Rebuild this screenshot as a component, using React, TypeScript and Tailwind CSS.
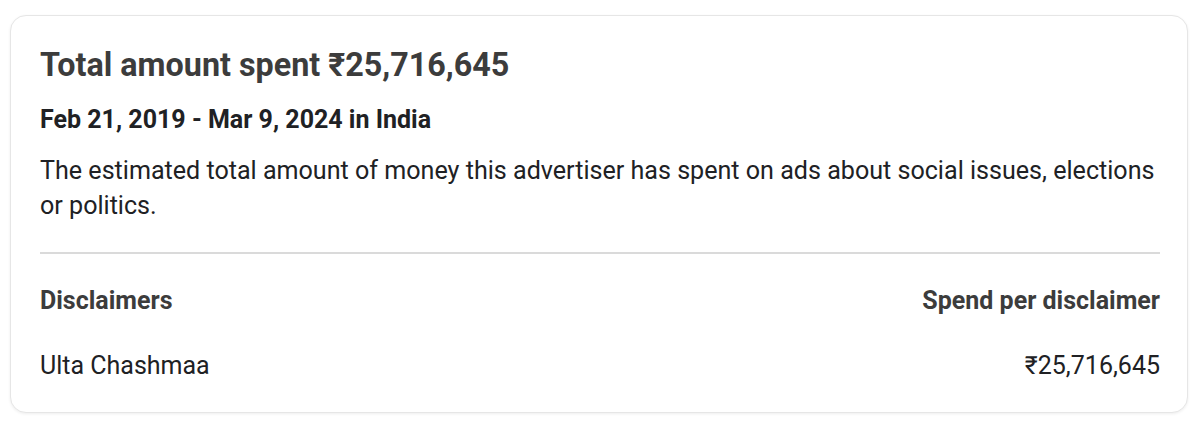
export default function App() {
  return (
    <div className="min-h-screen bg-white pl-[10px] pr-[12px] pt-[15px] pb-[18px]" style={{ fontFamily: "Roboto, 'Liberation Sans', sans-serif" }}>
      <div className="rounded-2xl border border-[#e6e6e6] bg-white pl-[29px] pr-[27px] pt-[29px] pb-[30px] shadow-[0_1px_3px_rgba(0,0,0,0.07)]">
        <h1 className="text-[32.3px] leading-[40px] font-bold text-[#3c3c3c]">Total amount spent ₹25,716,645</h1>
        <h2 className="mt-[19px] text-[25px] leading-[32px] font-bold text-[#202124]">Feb 21, 2019 - Mar 9, 2024 in India</h2>
        <p className="mt-[17px] text-[25.1px] leading-[35px] text-[#202124]">
          The estimated total amount of money this advertiser has spent on ads about social issues, elections or politics.
        </p>
        <div className="mt-[29px] border-t-2 border-[#dadada]" />
        <div className="mt-[31px] flex justify-between text-[25px] leading-[32px] font-bold text-[#3c3c3c]">
          <span>Disclaimers</span>
          <span>Spend per disclaimer</span>
        </div>
        <div className="mt-[33px] flex justify-between text-[25px] leading-[32px] text-[#202124]">
          <span>Ulta Chashmaa</span>
          <span>₹25,716,645</span>
        </div>
      </div>
    </div>
  );
}
